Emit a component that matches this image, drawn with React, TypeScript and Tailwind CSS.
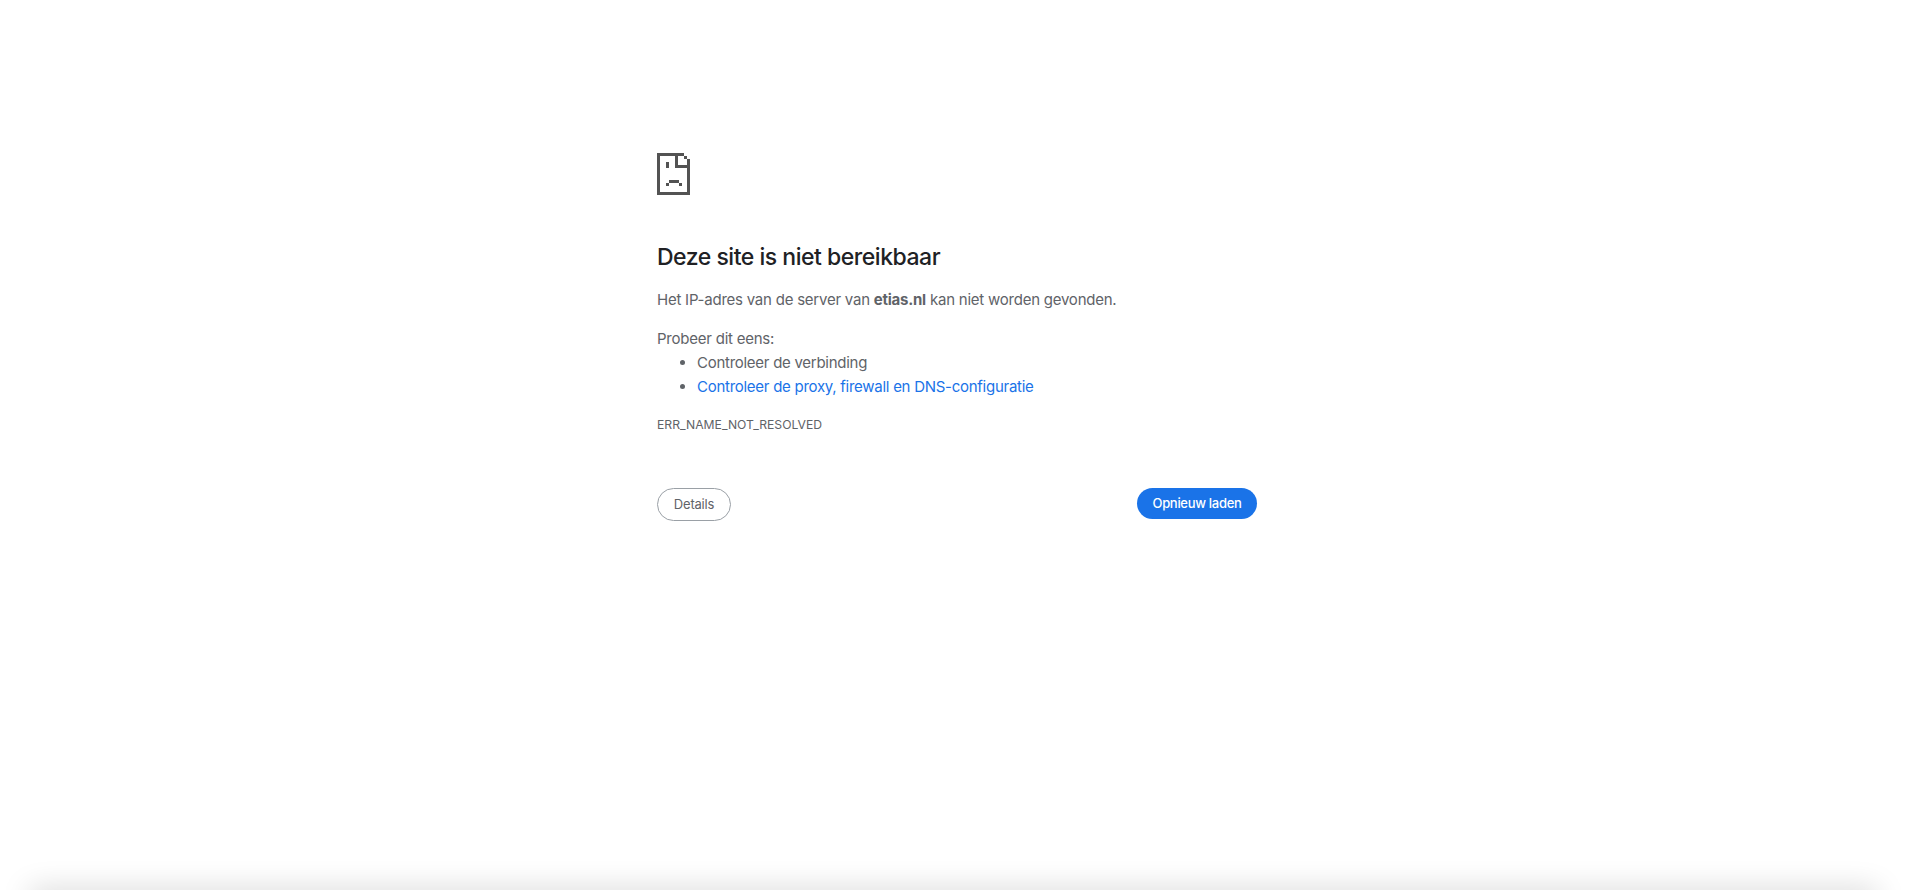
import React from "react";

function SadTab() {
  return (
    <svg width="33" height="42" viewBox="0 0 33 42" shapeRendering="crispEdges" className="block">
      <path
        fill="#535353"
        d="M0 0h27v3h-24v36h27v-24h3v27h-33zM27 3h3v3h-3zM30 6h3v9h-15v-12h3v9h9zM9 9h3v6h-3zM12 27h10v3h-10zM9 30h3v3h-3zM22 30h3v3h-3z"
      />
    </svg>
  );
}

export default function App() {
  return (
    <div className="relative h-[890px] w-full overflow-hidden bg-white font-['Inter','Liberation_Sans',sans-serif] text-[#5f6368]">
      <div className="ml-[657px] w-[600px] pt-[153px]">
        <SadTab />
        <h1 className="mt-[46px] text-[23px] font-medium leading-[32px] tracking-[-0.48px] text-[#202124]">
          Deze site is niet bereikbaar
        </h1>
        <p className="mt-[15px] text-[15px] leading-[24px] tracking-[-0.23px]">
          Het IP-adres van de server van <b className="font-bold">etias.nl</b> kan niet worden gevonden.
        </p>
        <p className="mt-[15px] text-[15px] leading-[24px] tracking-[-0.23px]">Probeer dit eens:</p>
        <ul className="list-disc pl-[40px] text-[15px] leading-[24px] tracking-[-0.27px]">
          <li>Controleer de verbinding</li>
          <li>
            <span className="text-[#1a73e8]">Controleer de proxy, firewall en DNS-configuratie</span>
          </li>
        </ul>
        <div className="mt-[16px] text-[12.2px] leading-[20px]">ERR_NAME_NOT_RESOLVED</div>
        <div className="mt-[53px] flex items-start justify-between">
          <button className="h-[33px] w-[74px] rounded-full border border-[#9aa0a6] pt-px text-[13px] tracking-[-0.2px] text-[#5f6368]">
            Details
          </button>
          <button className="h-[31px] w-[120px] rounded-full bg-[#1a73e8] text-[13px] font-medium tracking-[-0.3px] text-white">
            Opnieuw laden
          </button>
        </div>
      </div>
      <div className="absolute bottom-[-20px] left-[30px] right-[30px] h-[20px] shadow-[0_0_30px_rgba(0,0,0,0.18)]" />
    </div>
  );
}
